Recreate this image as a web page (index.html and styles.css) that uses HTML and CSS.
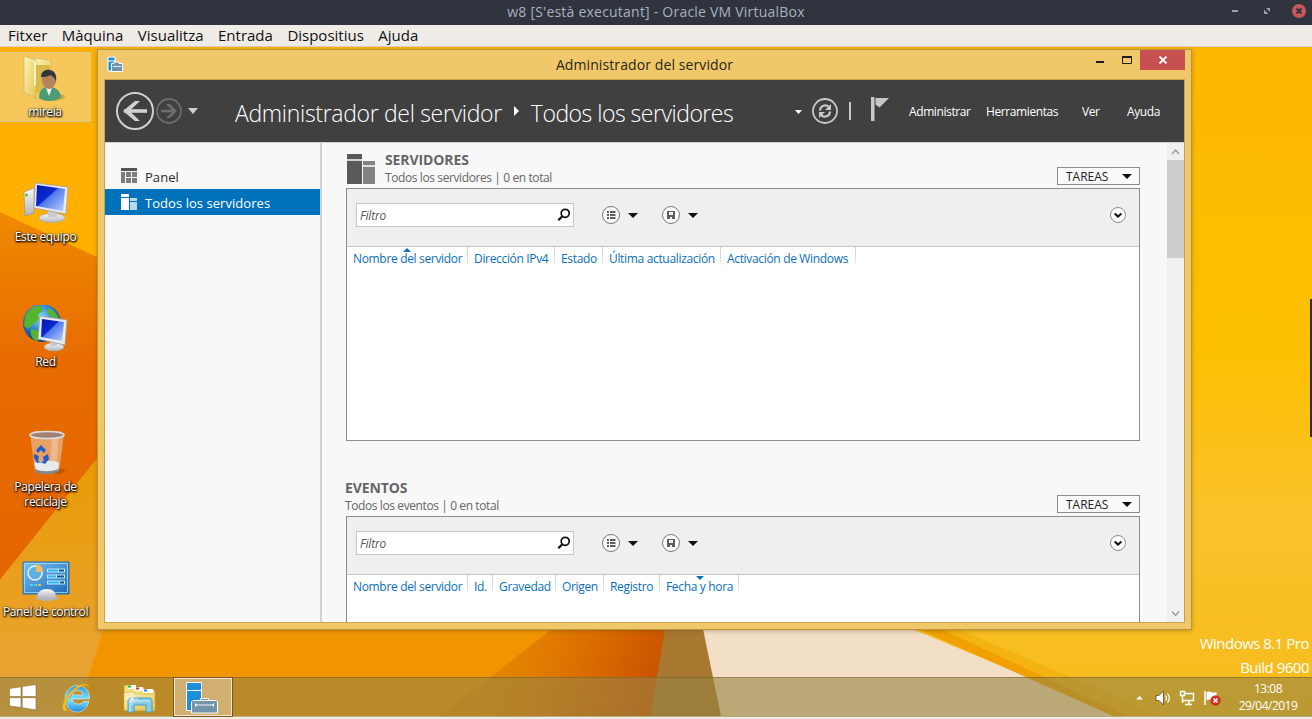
FILE: index.html
```html
<!DOCTYPE html>
<html lang="ca">
<head>
<meta charset="utf-8">
<title>w8 [S'està executant] - Oracle VM VirtualBox</title>
<link rel="stylesheet" href="styles.css">
</head>
<body>
<svg class="defs" width="0" height="0" aria-hidden="true">
  <defs>
    <linearGradient id="screen" x1="0" y1="0" x2="1" y2="1"><stop offset="0" stop-color="#0618a8"/><stop offset=".42" stop-color="#0a2ad0"/><stop offset=".46" stop-color="#4f78ec"/><stop offset="1" stop-color="#b9d0fb"/></linearGradient>
    <linearGradient id="metal" x1="0" y1="0" x2="0" y2="1"><stop offset="0" stop-color="#f8f8f8"/><stop offset="1" stop-color="#b4b6ba"/></linearGradient>
    <linearGradient id="paper" x1="0" y1="0" x2="1" y2="1"><stop offset="0" stop-color="#fff6bd"/><stop offset="1" stop-color="#e3c24e"/></linearGradient>
    <linearGradient id="ie" x1="0" y1="0" x2="0" y2="1"><stop offset="0" stop-color="#2f9bdf"/><stop offset=".55" stop-color="#7fe3fb"/><stop offset="1" stop-color="#1f8bd8"/></linearGradient>
    <linearGradient id="panelBlue" x1="0" y1="0" x2="1" y2="1"><stop offset="0" stop-color="#79c0ec"/><stop offset="1" stop-color="#1c69bd"/></linearGradient>
    <radialGradient id="globe" cx=".45" cy=".35" r=".65"><stop offset="0" stop-color="#8edcf4"/><stop offset=".55" stop-color="#2f80cf"/><stop offset="1" stop-color="#0f3d8a"/></radialGradient>
    <symbol id="list-icon" viewBox="0 0 20 20"><circle cx="10" cy="10" r="8.5" fill="#fafafa" stroke="#7a7a7a"/><path d="M6 6h2v2H6zM6 9h2v2H6zM6 12h2v2H6zM9 6h5.5v2H9zM9 9h5.5v2H9zM9 12h5.5v2H9z" fill="#5e5e5e"/></symbol>
    <symbol id="save-icon" viewBox="0 0 20 20"><circle cx="10" cy="10" r="8.5" fill="#fafafa" stroke="#7a7a7a"/><path d="M6 6h8v8H6z" fill="#5e5e5e"/><path d="M8 7h4v3H8zM9 12h2v2H9z" fill="#eee"/></symbol>
    <symbol id="lens-icon" viewBox="0 0 14 14"><circle cx="8.2" cy="5.3" r="4" fill="none" stroke="#111" stroke-width="1.7"/><path d="M5.3 8.2L1.3 12.2" stroke="#111" stroke-width="2.3"/></symbol>
    <symbol id="expand-icon" viewBox="0 0 18 18"><circle cx="9" cy="9" r="7.5" fill="#fff" stroke="#8a8a8a"/><path d="M5.6 7.4L9 10.6l3.4-3.2" fill="none" stroke="#111" stroke-width="2"/></symbol>
  </defs>
</svg>

<div class="host-title"><span>w8 [S'està executant] - Oracle VM VirtualBox</span>
  <svg class="host-controls" width="80" height="22" viewBox="0 0 80 22"><path d="M0 11h6" stroke="#9aa0aa" stroke-width="2"/><path d="M34 8h4v4zM32 9.5V14h4.5z" fill="#9aa0aa"/><circle cx="67" cy="11" r="7" fill="#cc575d"/><path d="M64.5 8.5l5 5m0-5l-5 5" stroke="#2f343f" stroke-width="2"/></svg>
</div>
<nav class="host-menu"><span>Fitxer</span><span>Màquina</span><span>Visualitza</span><span>Entrada</span><span>Dispositius</span><span>Ajuda</span></nav>

<main class="desktop">
  <svg class="wallpaper" width="1312" height="669" viewBox="0 47 1312 669" preserveAspectRatio="none">
    <defs>
      <linearGradient id="wTop" x1="0" y1="0" x2="0" y2="1"><stop offset="0" stop-color="#fdb700"/><stop offset=".45" stop-color="#fcc000"/><stop offset=".7" stop-color="#fac12a"/><stop offset="1" stop-color="#f6bc1c"/></linearGradient>
      <linearGradient id="wLeft" x1="0" y1="0" x2="0" y2="1"><stop offset="0" stop-color="#f08a00"/><stop offset=".4" stop-color="#e86c00"/><stop offset="1" stop-color="#e56500"/></linearGradient>
      <linearGradient id="wTan" x1="0" y1="0" x2="0" y2="1"><stop offset="0" stop-color="#e99a00"/><stop offset="1" stop-color="#e9a53c"/></linearGradient>
      <linearGradient id="wFlame" gradientUnits="userSpaceOnUse" x1="500" y1="640" x2="650" y2="690"><stop offset="0" stop-color="#e48800"/><stop offset=".4" stop-color="#df7600"/><stop offset="1" stop-color="#cc5400"/></linearGradient>
    </defs>
    <path d="M0 47h1312v669H0z" fill="url(#wTop)"/>
    <path d="M0 47h110v216L0 212z" fill="#ffb000"/>
    <path d="M0 212l110 51v180L0 580z" fill="url(#wLeft)"/>
    <path d="M0 580L110 442v274H0z" fill="url(#wTan)"/>
    <path d="M104 629L75 716h600V629z" fill="#f09500"/>
    <path d="M552 629L440 716h240V629z" fill="url(#wFlame)"/>
    <path d="M665 629L650 716h80V629z" fill="#a87830"/>
    <path d="M703 629l18 87h400L912 629z" fill="#f2dfc6"/>
    <path d="M918 629l195 87h22L945 629z" fill="#f0a000"/>
    <path d="M941 629l187 87h34L958 629z" fill="#f5b312"/>
    <path d="M1310 299h2v138h-2z" fill="#2b2f3a"/>
  </svg>

  <section class="workarea">
    <ul class="shortcuts">
      <li class="picked"><svg width="48" height="48" viewBox="0 0 48 48"><path d="M12 3l18 2v32l-18 1z" fill="url(#paper)" stroke="#cfae49" stroke-width=".6"/><path d="M14 10h15v27H14z" fill="#d8b94c"/><path d="M3 1l12 4v39L3 37z" fill="url(#paper)" stroke="#d3b252" stroke-width=".7"/><path d="M8 4l7 3v22l-2 3V7z" fill="#fdf5bd"/><ellipse cx="34" cy="42" rx="10" ry="3.5" fill="#8a6a20" opacity=".35"/><path d="M18 43c0-8 4-11 10-11s11 3 12 10c-5 5-17 5-22 1z" fill="#4a9d72"/><path d="M25 33l3 8 3-8z" fill="#f2f2f2"/><ellipse cx="28" cy="25" rx="7" ry="9" fill="#b4835b"/><path d="M20 22c0-6 5-8 9-7 5 1 7 5 6 12-1-4-3-6-6-7-3 2-6 2-9 2z" fill="#33363a"/></svg><span>mireia</span></li>
      <li><svg width="48" height="48" viewBox="0 0 48 48"><path d="M2 12l10-4v25l-9 3z" fill="url(#metal)" stroke="#8b8d90" stroke-width=".6"/><circle cx="4.500" cy="15" r="1.500" fill="#4ac62c"/><ellipse cx="30" cy="38" rx="13" ry="4.500" fill="url(#metal)" stroke="#a3a5a8" stroke-width=".6"/><path d="M26 29h9v8h-9z" fill="#c9cbd0"/><path d="M13 3l33 4-2 27-32-6z" fill="#e8eaee" stroke="#9a9ca2" stroke-width=".7"/><path d="M15 5l28 4-2 22-27-5z" fill="url(#screen)"/></svg><span>Este equipo</span></li>
      <li><svg width="48" height="48" viewBox="0 0 48 48"><circle cx="20" cy="18" r="19" fill="url(#globe)"/><path d="M3 12c4-8 10-12 16-11l2 5-5 3 1 6-6 4-5 5-4-3zM27 3c5 2 9 7 10 12l-6-2-6-5zM9 24l8 2 3 8-6 2c-4-2-6-7-5-12z" fill="#55b52f"/><ellipse cx="32" cy="42" rx="10" ry="4" fill="url(#metal)" stroke="#a3a5a8" stroke-width=".6"/><path d="M28 35h7v6h-7z" fill="#c9cbd0"/><path d="M18 11l27 4-2 25-27-6z" fill="#e8eaee" stroke="#9a9ca2" stroke-width=".7"/><path d="M20 14l22 3-2 19-21-4z" fill="url(#screen)"/></svg><span>Red</span></li>
      <li><svg width="48" height="48" viewBox="0 0 48 48"><ellipse cx="34" cy="41" rx="9" ry="3" fill="#7a3a00" opacity=".4"/><path d="M8 4h34l-5 37c-6 4-18 4-24 0z" fill="#e8d8cc" opacity=".5"/><path d="M30 6h7l-3 34h-6z" fill="#fff" opacity=".25"/><path d="M12 33c6-3 20-3 25 0l-1 7c-6 4-17 4-22 0z" fill="#e9eaec"/><path d="M13 39c6 3 17 3 23 0l-.5 3c-6 3-17 3-22 0z" fill="#85888c"/><ellipse cx="25" cy="5" rx="17" ry="3.500" fill="#a08070" stroke="#dcdde0" stroke-width="1.500"/><path d="M14 20l5-5 5 5-2 3-3-3-3 3zM12 24l5 2-1 5 3 1-4 1-3-5zM21 27l5-3 1 5-4 5-5-2 4-1z" fill="#235cc9"/></svg><span>Papelera de reciclaje</span></li>
      <li><svg width="48" height="48" viewBox="0 0 48 48"><path d="M1 7h46v32H1z" fill="url(#panelBlue)" stroke="#1f70b8"/><path d="M2.500 8.500h43v29h-43z" fill="none" stroke="#a6dcf5" stroke-width=".8"/><circle cx="13" cy="18" r="7" fill="#5fb0e2" stroke="#e8f6fd" stroke-width="1.400"/><path d="M14 17V9c4 0 7 3 7 8z" fill="#f6b95e"/><path d="M25 13.500h18v4H25zM25 19.500h18v4H25zM25 25.500h18v4H25z" fill="#bfeafc"/><path d="M26 14.500h10v2H26zM26 20.500h8v2h-8zM26 26.500h11v2H26z" fill="#32b3ef"/><path d="M37 14.500h5v2h-5zM35 20.500h7v2h-7zM38 26.500h4v2h-4z" fill="#135596"/><path d="M8 29h3v2H8zM12 29h3v2h-3z" fill="#43ddf7"/><path d="M16 29h3v2h-3z" fill="#f6b44a"/><ellipse cx="25" cy="43" rx="11" ry="3" fill="#b3b5b9"/><path d="M15 43c0-6 4-9 10-9s9 3 9 9z" fill="url(#metal)"/></svg><span>Panel de control</span></li>
    </ul>

    <article class="window">
      <header class="caption">
        <svg class="caption-icon" width="18" height="18" viewBox="0 0 18 18"><path d="M2 2h7v14H2z" fill="#1f8fdd" stroke="#fff"/><path d="M2 6h7" stroke="#fff"/><path d="M8 8.500V7h5v1.500h3.500v8h-11v-8z" fill="#6f93ad" stroke="#fff"/><path d="M7 11.500h8" stroke="#e4edf3"/></svg>
        <span class="caption-text">Administrador del servidor</span>
        <div class="caption-buttons">
          <svg width="42" height="20" viewBox="0 0 42 20"><path d="M0 11h8v2H0z" fill="#1e1e1e"/><path d="M26.500 7.500h9v6h-9z" fill="none" stroke="#1e1e1e"/><path d="M26 6h10v2H26z" fill="#1e1e1e"/></svg>
          <div class="close"><svg width="10" height="8" viewBox="0 0 10 8"><path d="M1.500 .5l7 7m0-7l-7 7" stroke="#fff" stroke-width="1.800"/></svg></div>
        </div>
      </header>

      <div class="client">
        <div class="banner">
          <svg class="history" width="84" height="40" viewBox="0 0 84 40"><circle cx="20" cy="20" r="18" fill="none" stroke="#d0d0d0" stroke-width="2"/><path d="M9 20h23" stroke="#d0d0d0" stroke-width="3.600"/><path d="M20 10h5L14.500 20 25 30h-5L8 20z" fill="#d0d0d0"/><circle cx="54" cy="20" r="12" fill="none" stroke="#6d6d6d" stroke-width="1.800"/><path d="M46 20h14" stroke="#6d6d6d" stroke-width="2.600"/><path d="M55 13h-4l7 7-7 7h4l7-7z" fill="#6d6d6d"/><path d="M73 17h10l-5 6z" fill="#cfcfcf"/></svg>
          <h1><span class="crumb-root">Administrador del servidor</span><svg width="5" height="10" viewBox="0 0 5 10"><path d="M0 0l5 5-5 5z" fill="#fff"/></svg><span class="crumb-leaf">Todos los servidores</span></h1>
          <svg class="tools" width="98" height="30" viewBox="0 0 98 30"><path d="M0 14h7l-3.500 4z" fill="#fff"/><circle cx="30" cy="15" r="12" fill="none" stroke="#c8c8c8" stroke-width="1.800"/><path d="M25 14.500c0-5 6-6.500 9-3.500" fill="none" stroke="#c8c8c8" stroke-width="2.200"/><path d="M36 8v6h-6z" fill="#c8c8c8"/><path d="M35 15.500c0 5-6 6.500-9 3.500" fill="none" stroke="#c8c8c8" stroke-width="2.200"/><path d="M24 22v-6h6z" fill="#c8c8c8"/><path d="M54 6h2v18h-2z" fill="#c8c8c8"/><path d="M76 1h3.500v24H76z" fill="#c8c8c8"/><path d="M80.500 2H94L84.500 11.500l-4-3z" fill="#c8c8c8"/></svg>
          <nav class="banner-menu"><span>Administrar</span><span>Herramientas</span><span>Ver</span><span>Ayuda</span></nav>
        </div>

        <div class="body">
          <aside>
            <div class="side-item"><svg width="16" height="16" viewBox="0 0 16 16"><path d="M0 0h16v3H0z" fill="#555"/><path d="M0 4h4v11H0zM5 4h5v5H5zM11 4h5v5h-5zM5 10h5v5H5zM11 10h5v5h-5z" fill="#7d7d7d"/></svg><span>Panel</span></div>
            <div class="side-item active"><svg width="16" height="16" viewBox="0 0 16 16"><path d="M0 0h8v3H0zM0 4h8v12H0z" fill="#fff"/><path d="M9 4h7v3H9zM9 8h7v8H9z" fill="#b9d9ef"/></svg><span>Todos los servidores</span></div>
          </aside>

          <div class="tiles">
            <section class="tile servers">
              <header class="tile-head">
                <svg width="28" height="30" viewBox="0 0 28 30"><path d="M0 0h15v5H0zM0 7h15v23H0z" fill="#595959"/><path d="M0 6h15" stroke="#aaa"/><path d="M16 7h12v4H16zM16 13h12v17H16z" fill="#828282"/><path d="M16 12h12" stroke="#c5c5c5"/></svg>
                <div class="tile-name"><h2>SERVIDORES</h2><p>Todos los servidores | 0 en total</p></div>
                <div class="tasks"><span>TAREAS</span><i class="down"></i></div>
              </header>
              <div class="grid-box">
                <div class="filter-bar">
                  <div class="filter"><em>Filtro</em><svg width="14" height="14"><use href="#lens-icon"/></svg></div>
                  <div class="tool"><svg width="20" height="20"><use href="#list-icon"/></svg><i class="down"></i></div>
                  <div class="tool"><svg width="20" height="20"><use href="#save-icon"/></svg><i class="down"></i></div>
                  <svg class="expand" width="18" height="18"><use href="#expand-icon"/></svg>
                </div>
                <div class="columns server-columns"><span class="asc">Nombre del servidor</span><span>Dirección IPv4</span><span>Estado</span><span>Última actualización</span><span>Activación de Windows</span></div>
              </div>
            </section>
            <section class="tile events">
              <header class="tile-head">
                <div class="tile-name"><h2>EVENTOS</h2><p>Todos los eventos | 0 en total</p></div>
                <div class="tasks"><span>TAREAS</span><i class="down"></i></div>
              </header>
              <div class="grid-box">
                <div class="filter-bar">
                  <div class="filter"><em>Filtro</em><svg width="14" height="14"><use href="#lens-icon"/></svg></div>
                  <div class="tool"><svg width="20" height="20"><use href="#list-icon"/></svg><i class="down"></i></div>
                  <div class="tool"><svg width="20" height="20"><use href="#save-icon"/></svg><i class="down"></i></div>
                  <svg class="expand" width="18" height="18"><use href="#expand-icon"/></svg>
                </div>
                <div class="columns event-columns"><span>Nombre del servidor</span><span>Id.</span><span>Gravedad</span><span>Origen</span><span>Registro</span><span class="desc">Fecha y hora</span></div>
              </div>
            </section>
          </div>

          <div class="scrollbar">
            <svg width="17" height="17" viewBox="0 0 17 17"><path d="M5 11l3.500-4 3.500 4" fill="none" stroke="#9b9b9b" stroke-width="1.400"/></svg>
            <div class="thumb"></div>
            <svg width="17" height="17" viewBox="0 0 17 17"><path d="M5 6.500l3.500 4 3.500-4" fill="none" stroke="#9b9b9b" stroke-width="1.400"/></svg>
          </div>
        </div>
      </div>
    </article>

    <div class="watermark"><div>Windows 8.1 Pro</div><div class="build">Build 9600</div></div>
  </section>

  <footer class="taskbar">
    <div class="task start"><svg width="28" height="27" viewBox="0 0 28 27"><path d="M.5 4.500L12 2.800v9.700H.5zM13.200 2.600L27 .5v12H13.200zM.5 13.700H12V23.500L.5 22zM13.200 13.700H27v12.200l-13.800-2.200z" fill="#fff" stroke="#7f5f20" stroke-width=".5"/></svg></div>
    <div class="task"><svg width="34" height="34" viewBox="0 0 34 34"><path d="M18 4.500c7 0 12 6 11.500 13.500H12c.5 3 3 5 6 5 2.500 0 4-.8 5-2.500h6C27 27 23 31 17.500 31 10 31 5 25 5 18S10 4.500 18 4.500zM12.500 14H23c-.5-3-2.500-4.500-5-4.500S13 11 12.500 14z" fill="url(#ie)" stroke="#e0f5fd" stroke-width=".6"/><path d="M28.500 8c.8-3-.6-5.500-4.500-5C14 4.500 3 18 2.500 26c-.2 4 3 5 7 3-3 .5-4.500-.8-4-4C6.500 18 15 7 24 4.500c2.600-.6 4 .8 4.500 3.500z" fill="#f9c624" stroke="#d08c00" stroke-width=".5"/></svg></div>
    <div class="task"><svg width="34" height="34" viewBox="0 0 34 34"><path d="M2 4h9l2 2h8l2 3h10v21H2z" fill="#f2dd7f" stroke="#b98f2a" stroke-width=".7"/><path d="M6 4h8v4H6zM13 6h8v4h-8zM21 8h10v4H21z" fill="#fff"/><path d="M6 4.500h3v2H6z" fill="#1db31d"/><path d="M14 6.500h3v2h-3z" fill="#d4362c"/><path d="M22 8.500h3v2h-3z" fill="#1685dd"/><path d="M2 12l8-1 3 2h20v16H2z" fill="url(#paper)" stroke="#cfa63d" stroke-width=".5"/><path d="M6 31V20c0-2 1-3 3-3h18c2 0 3 1 3 3v11h-6v-7H12v7z" fill="#86cbe8" stroke="#4a9cc4"/><path d="M8 31V20h20" fill="none" stroke="#d3f0fb"/><path d="M10 12v12M4 18h12M6.500 14.500l7 7m0-7l-7 7" stroke="#fff" stroke-width=".7"/></svg></div>
    <div class="task current"><svg width="34" height="34" viewBox="0 0 34 34"><path d="M1.500 1.500h15v28h-15z" fill="#1f8fdd" stroke="#fff"/><path d="M1.500 9.500h15" stroke="#fff"/><path d="M15.500 19.500v-2h8v2" fill="#7394a9" stroke="#fff"/><path d="M8 19.500h23l1.500 1.500v11h-26V21z" fill="#7394a9" stroke="#fff"/><path d="M10 24h19" stroke="#f4f4f4"/><path d="M10 22l2 2-2 2zM29 22l-2 2 2 2z" fill="#fff"/></svg></div>
    <div class="tray">
      <svg width="88" height="22" viewBox="0 0 88 22"><path d="M1 12.500l3.500-3.500L8 12.500z" fill="#fff"/><path d="M21 8.500h3L28.500 4v14L24 13.500h-3z" fill="#fff" stroke="#5e4a1c" stroke-width=".8"/><path d="M30.500 8.500q2 2.500 0 5M32.500 6.500q3.500 4.500 0 9" fill="none" stroke="#fff" stroke-width="1.200"/><path d="M49.500 6.500h9v7h-11" fill="none" stroke="#fff" stroke-width="1.500"/><path d="M54 14v3M50 17.500h7" stroke="#fff" stroke-width="1.500"/><path d="M45.500 4.500h4v4h-4zM47.500 9v7" fill="none" stroke="#fff" stroke-width="1.500"/><path d="M70 4v14" stroke="#fff" stroke-width="1.500"/><path d="M71.500 5c4-2 5 2 10 0v8c-5 2-6-2-10 0z" fill="#fff"/><circle cx="80.500" cy="13.500" r="4.800" fill="#dc2f26" stroke="#8f1813" stroke-width=".5"/><path d="M78.500 11.500l4 4m0-4l-4 4" stroke="#fff" stroke-width="1.500"/></svg>
      <div class="clock"><div>13:08</div><div>29/04/2019</div></div>
    </div>
  </footer>
</main>
</body>
</html>
```
FILE: styles.css
```css
* { box-sizing: border-box; }
body {
  margin: 0;
  width: 1312px;
  height: 719px;
  overflow: hidden;
  display: flex;
  flex-direction: column;
  background: #efebe7;
  font-family: "Open Sans", "Noto Sans", sans-serif;
  font-size: 12px;
  white-space: nowrap;
}
svg { display: block; flex: none; }
h1, h2, p, ul { margin: 0; padding: 0; font-weight: 400; }
.defs { position: absolute; }

.host-title {
  position: relative;
  height: 25px;
  padding-bottom: 3px;
  display: flex;
  align-items: center;
  justify-content: center;
  background: #2f343f;
  color: #a9b0be;
  font-size: 14px;
  letter-spacing: .22px;
}
.host-controls { position: absolute; left: 1232px; top: 0; }
.host-menu {
  height: 22px;
  padding-left: 8px;
  display: flex;
  gap: 14.5px;
  background: #efebe7;
  border-bottom: 1px solid #d6d2cd;
  color: #111;
  font-size: 15px;
  line-height: 21px;
}

.desktop { position: relative; height: 669px; display: flex; flex-direction: column; }
.wallpaper { position: absolute; left: 0; top: 0; }
.workarea { position: relative; flex: 1; padding-top: 5px; }

.shortcuts { width: 91px; list-style: none; }
.shortcuts li {
  height: 125px;
  padding-top: 3px;
  display: flex;
  flex-direction: column;
  align-items: center;
  gap: 1px;
  color: #fff;
  line-height: 15px;
  letter-spacing: -.37px;
  text-align: center;
  text-shadow: 1px 1px 2px #000, 0 1px 2px #000, 0 0 2px rgba(0,0,0,.7);
}
.shortcuts span { width: 91px; white-space: normal; padding: 0 0 0 0; }
.shortcuts li:nth-child(4) span { width: 75px; }
.shortcuts .picked {
  height: 70px;
  padding-top: 2px;
  margin-bottom: 55px;
  background: rgba(240,215,150,.6);
  border: 1px solid #d8cb90;
  border-left: 0;
}

.window {
  position: absolute;
  left: 97px;
  top: 2px;
  width: 1095px;
  height: 581px;
  border: 1px solid #b8963f;
  background: #f0c869;
  box-shadow: 0 1px 4px rgba(90,60,0,.35);
}
.caption { height: 29px; display: flex; align-items: center; justify-content: center; position: relative; }
.caption-text { font-size: 14px; letter-spacing: .1px; color: #28261f; }
.caption-icon { position: absolute; left: 8px; top: 5px; }
.caption-buttons { position: absolute; right: 6px; top: 0; display: flex; gap: 2px; }
.close { width: 45px; height: 20px; display: flex; align-items: center; justify-content: center; background: #c75050; }

.client { height: 544px; margin: 0 6px; border: 1px solid #c9a24c; display: flex; flex-direction: column; background: #f8f8f8; }
.banner { height: 62px; padding-left: 10px; display: flex; align-items: center; background: #404040; color: #fff; }
.banner h1 { width: 560px; margin-left: 36px; display: flex; align-items: center; font-size: 23px; font-weight: 300; line-height: 32px; padding-top: 3px; }
.banner h1 svg { margin: -3px 12px 0 12px; }
.crumb-root { letter-spacing: -.32px; }
.crumb-leaf { letter-spacing: -.5px; }
.banner-menu { margin-left: 16px; display: grid; grid-template-columns: 77px 96px 45px 40px; letter-spacing: -.4px; }

.body { height: 480px; border-top: 1px solid #cfcfcf; display: flex; }
aside { width: 217px; padding-top: 20px; border-right: 2px solid #d2d2d2; }
.side-item { height: 26px; padding-left: 16px; display: flex; align-items: center; gap: 8px; font-size: 13px; letter-spacing: .05px; color: #2b2b2b; }
.side-item span { padding-top: 2px; }
.active { background: #0072bc; color: #fff; }

.tiles { width: 845px; height: 479px; overflow: hidden; padding: 8px 27px 0 24px; }
.tile-head { height: 37px; display: flex; align-items: flex-start; color: #666; }
.tile-head > svg { margin: 3px 10px 0 1px; }
.tile-name { flex: 1; line-height: 18px; }
.tile-name h2 { font-size: 14px; font-weight: 700; letter-spacing: -.1px; }
.tile-name p { letter-spacing: -.4px; }
.events .tile-name { margin-left: -1px; }
.tasks { width: 83px; height: 18px; margin-top: 16px; padding: 0 7px 0 8px; border: 1px solid #8c8c8c; display: flex; align-items: center; justify-content: space-between; color: #222; background: #fafafa; }
.down { width: 0; height: 0; border: 5px solid transparent; border-top-color: #111; border-bottom: 0; }
.grid-box { height: 253px; border: 1px solid #8c8c8c; background: #fff; }
.servers { margin-bottom: 38px; }
.filter-bar { height: 58px; padding: 14px 12px 0 9px; display: flex; background: #efefef; border-bottom: 1px solid #c6c6c6; }
.filter { width: 218px; height: 24px; margin-right: 27px; padding: 0 2px 0 3px; border: 1px solid #c6c6c6; background: #fff; display: flex; align-items: center; justify-content: space-between; color: #555; letter-spacing: -.2px; }
.tool { width: 60px; height: 24px; display: flex; align-items: center; gap: 7px; }
.expand { margin: 3px 0 0 auto; }
.columns { display: grid; color: #0b6fb8; line-height: 24px; letter-spacing: -.33px; }
.server-columns { grid-template-columns: 121px 87px 48px 118px 135px; }
.event-columns { grid-template-columns: 121px 25px 63px 48px 56px 79px; }
.columns span {
  position: relative;
  padding-left: 6px;
  background: linear-gradient(#d0d0d0, #dedede 60%, #fff) right top / 1px 20px no-repeat;
}
.asc::before, .desc::before { content: ""; position: absolute; left: 56px; border: 4px solid transparent; }
.asc::before { top: 1px; border-bottom-color: #0b6fb8; border-top: 0; }
.desc::before { left: 36px; top: 1px; border-top-color: #0b6fb8; border-bottom: 0; }

.scrollbar { width: 17px; display: flex; flex-direction: column; background: #f0f0f0; }
.thumb { height: 98px; background: #cdcdcd; margin-bottom: auto; }

.watermark { position: absolute; right: 3px; bottom: -2px; color: #fff; font-size: 15px; line-height: 24px; text-align: right; letter-spacing: -.5px; }

.taskbar { position: relative; height: 40px; display: flex; align-items: center; background: rgba(150,131,67,.6); border-top: 1px solid rgba(110,90,40,.5); }
.task { width: 62px; display: flex; justify-content: center; }
.start { width: 46px; }
.current { width: 60px; height: 40px; margin: -1px 0 0 3px; padding: 3px 3px 0 0; background: rgba(225,200,160,.6); border: 1px solid #7a5a20; box-shadow: inset 0 0 0 1px #f2e6d2; }
.tray { margin-left: auto; display: flex; align-items: center; gap: 7px; padding-right: 6px; color: #fff; }
.clock { width: 76px; text-align: center; line-height: 16.500px; letter-spacing: -.5px; }
```
